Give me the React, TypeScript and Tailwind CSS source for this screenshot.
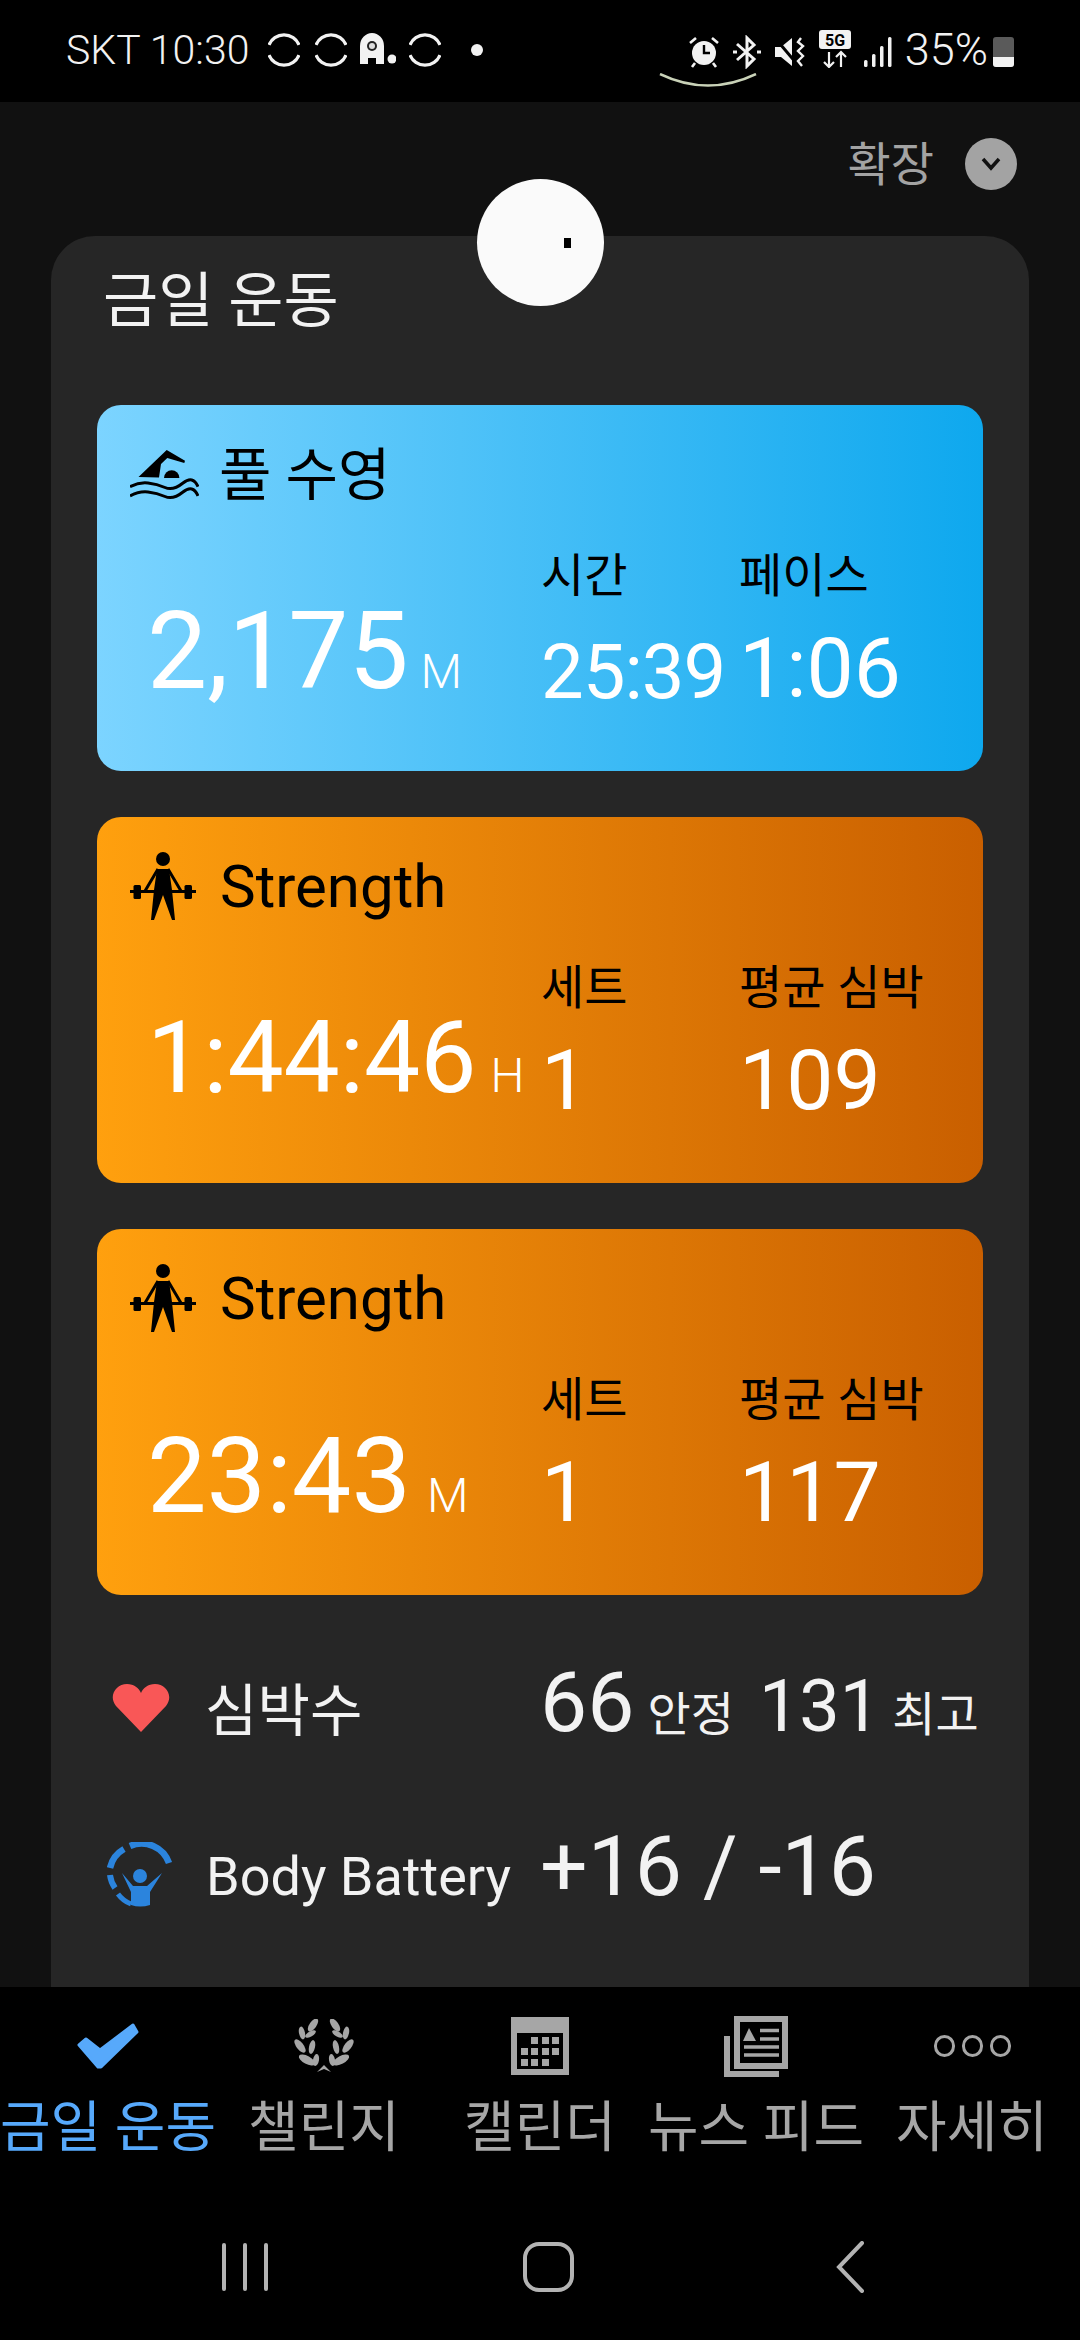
const FONT = "font-['Roboto','Noto_Sans_CJK_KR',sans-serif]";

const Ring = () => (
  <svg width="32" height="34" viewBox="0 0 32 34" fill="none" stroke="#f2f2f2" strokeWidth="3.2">
    <path d="M1 12 A16 15.5 0 0 1 31 12" />
    <path d="M1 22 A16 15.5 0 0 0 31 22" />
  </svg>
);

const Ghost = () => (
  <svg width="36" height="34" viewBox="0 0 36 34">
    <path d="M0 31 V13 A12 13 0 0 1 24 13 V31 H16 V25 H8 V31 Z" fill="#f2f2f2" />
    <circle cx="12" cy="13" r="5" fill="#222" />
    <circle cx="12" cy="13" r="3" fill="#ddd" />
    <circle cx="32" cy="26" r="4.5" fill="#f2f2f2" />
  </svg>
);

const StatusRight = () => (
  <div className="flex items-center">
    <svg width="30" height="32" viewBox="0 0 30 32" className="mt-1">
      <circle cx="15" cy="17" r="12" fill="#f2f2f2" />
      <path d="M15 9 V17 H21" stroke="#000" strokeWidth="2.4" fill="none" />
      <path d="M1 7 L7 2 M29 7 L23 2 M6 27 L3 31 M24 27 L27 31" stroke="#f2f2f2" strokeWidth="2.6" />
    </svg>
    <svg width="28" height="34" viewBox="0 0 28 34" fill="none" stroke="#f2f2f2" strokeWidth="3" className="ml-[14px] mt-1">
      <path d="M4 9 L21 24 L14 31 V3 L21 10 L4 25" />
      <path d="M0 17 H4 M24 17 H28" />
    </svg>
    <svg width="30" height="32" viewBox="0 0 30 32" className="ml-[14px] mt-1">
      <path d="M0 11 H6 L17 2 V30 L6 21 H0 Z" fill="#f2f2f2" />
      <path d="M0 2 L22 28" stroke="#000" strokeWidth="3" />
      <path d="M26 2 L23 6 L28 10 L23 15 L28 20 L23 25 L27 30" stroke="#f2f2f2" strokeWidth="2.4" fill="none" />
    </svg>
    <svg width="32" height="38" viewBox="0 0 32 38" className="ml-[14px] -mt-[2px]">
      <rect width="32" height="19" rx="3" fill="#f2f2f2" />
      <text x="16" y="16" textAnchor="middle" fontSize="16" fontWeight="700" fontFamily="Roboto" fill="#000">5G</text>
      <path d="M10 22 V37 M5 32 L10 37 L15 32 M22 37 V22 M17 27 L22 22 L27 27" stroke="#f2f2f2" strokeWidth="2.2" fill="none" />
    </svg>
    <svg width="28" height="30" viewBox="0 0 28 30" className="ml-[13px] mt-1" fill="#f2f2f2">
      <rect x="0" y="23" width="3.5" height="7" rx="1.5" />
      <rect x="8" y="17" width="3.5" height="13" rx="1.5" />
      <rect x="16" y="9" width="3.5" height="21" rx="1.5" />
      <rect x="24" y="0" width="3.5" height="30" rx="1.5" />
    </svg>
    <span className="ml-[13px] text-[45px] font-light leading-none text-[#f2f2f2]">35%</span>
    <div className="ml-[5px] mt-1 flex h-[30px] w-[21px] flex-col justify-end overflow-hidden rounded-[3px] bg-[#5a5a5a]">
      <div className="h-[10px] bg-[#f2f2f2]" />
    </div>
  </div>
);

const StatusBar = () => (
  <div className="relative flex h-[102px] shrink-0 items-start justify-between bg-black pl-[66px] pr-[66px] pt-[27px]">
    <div className="flex items-center">
      <span className="text-[41px] leading-[46px] font-light text-[#f2f2f2]">SKT 10:30</span>
      <div className="ml-[19px] flex items-center">
        <Ring />
        <div className="ml-[15px]"><Ring /></div>
        <div className="ml-[13px]"><Ghost /></div>
        <div className="ml-[13px]"><Ring /></div>
        <div className="ml-[30px] size-[12px] rounded-full bg-[#f2f2f2]" />
      </div>
    </div>
    <StatusRight />
    <svg width="100" height="16" viewBox="0 0 100 16" className="absolute left-[658px] top-[73px]" fill="none">
      <path d="M2 1 Q50 24 98 1" stroke="#c9d2b8" strokeWidth="2.5" />
    </svg>
  </div>
);

const SwimIcon = () => (
  <svg width="69" height="50" viewBox="0 0 69 50" className="shrink-0">
    <path d="M8.5 27 L36.7 0 L55 10.7 L54.3 13 L37.3 8 L31 14 L29 27.5 Z" fill="#000" />
    <path d="M34 28 A7.7 7.7 0 0 1 49.4 28 Z" fill="#000" />
    <path d="M0 36.7 Q9 32 18 33 T35 37.5 T53 33 T68 36.7 M0 46 Q9 41 18 42 T35 46.5 T53 42 T68 46" stroke="#000" strokeWidth="3" fill="none" />
  </svg>
);

const LiftIcon = () => (
  <svg width="68" height="70" viewBox="0 0 68 70" className="shrink-0">
    <circle cx="33" cy="7" r="7" fill="#000" />
    <path d="M27 17 H39 L42 38 L45 68 H42 L33 43 L24 68 H21 L24 38 Z" fill="#000" />
    <path d="M28 17 L15 39 M38 17 L51 39" stroke="#000" strokeWidth="3" fill="none" />
    <path d="M0 39.5 H66" stroke="#000" strokeWidth="3" />
    <rect x="3.5" y="33" width="7.5" height="14" rx="1.5" fill="#000" />
    <rect x="54.5" y="33" width="7.5" height="14" rx="1.5" fill="#000" />
  </svg>
);

type ActivityProps = {
  title: string;
  titleSize: string;
  gap: string;
  gradient: string;
  icon: React.ReactNode;
  total: string;
  totalSize: string;
  unit: string;
  unitGap: string;
  labelA: string;
  valueA: string;
  sizeA: string;
  labelB: string;
  valueB: string;
};

const Activity = ({ title, titleSize, gap, gradient, icon, total, totalSize, unit, unitGap, labelA, valueA, sizeA, labelB, valueB }: ActivityProps) => (
  <div className={`h-[366px] rounded-[24px] ${gradient}`}>
    <div className={`flex h-[130px] items-center pl-[33px] pt-[10px] ${gap}`}>
      {icon}
      <span className={`leading-none text-black ${titleSize}`}>{title}</span>
    </div>
    <div className="grid grid-cols-[444px_198px_1fr]">
      <div className={`flex items-baseline pl-[50px] pt-[52px] ${unitGap}`}>
        <span className={`leading-[130px] text-white ${totalSize}`}>{total}</span>
        <span className="text-[48px] font-light leading-none text-white">{unit}</span>
      </div>
      <div className="pt-[13px]">
        <div className="text-[47px] leading-[56px] text-black">{labelA}</div>
        <div className={`mt-[21px] text-white ${sizeA}`}>{valueA}</div>
      </div>
      <div className="pt-[13px]">
        <div className="text-[47px] leading-[56px] text-black">{labelB}</div>
        <div className="mt-[21px] text-[84px] leading-[88px] text-white">{valueB}</div>
      </div>
    </div>
  </div>
);

const BatteryIcon = () => (
  <svg width="66" height="66" viewBox="0 0 66 66" fill="none" className="shrink-0">
    <path d="M23 4 A29 29 0 0 1 62 21" stroke="#2b84dd" strokeWidth="6.5" />
    <path d="M17 7 A29 29 0 0 0 3 26" stroke="#2b84dd" strokeWidth="6.5" />
    <path d="M3 33 A29 29 0 0 0 8 46" stroke="#2b84dd" strokeWidth="6" />
    <path d="M11 52 A29 29 0 0 0 24 62" stroke="#2b84dd" strokeWidth="5" />
    <circle cx="33" cy="34" r="7" fill="#2b84dd" />
    <path d="M15 31 L26 44 H40 L55 31 L43 50 V63 Q33 66 24 63 V50 Z" fill="#2b84dd" />
  </svg>
);

const leaves = [
  "translate(20 6) rotate(35) scale(3.5 7.5)",
  "translate(9 14) rotate(-12) scale(3 6.5)",
  "translate(17.5 15) rotate(60) scale(2.5 6)",
  "translate(7 27) rotate(-38) scale(3.5 8)",
  "translate(19 28) rotate(12) scale(3 7)",
  "translate(14 41) rotate(-62) scale(4 9)",
  "translate(23 41) rotate(10) scale(3 6)",
];

const LaurelIcon = () => (
  <svg width="62" height="54" viewBox="0 0 62 54" fill="#a6a6a6">
    {leaves.map((t) => (
      <g key={t}>
        <ellipse cx="0" cy="0" rx="1" ry="1" transform={t} />
        <ellipse cx="0" cy="0" rx="1" ry="1" transform={`translate(62 0) scale(-1 1) ${t}`} />
      </g>
    ))}
    <path d="M24 53 L31 46 L38 53 L31 50 Z" />
  </svg>
);

const CalendarIcon = () => {
  const rows = [
    [0, 1, 1, 1],
    [1, 1, 1, 1],
    [1, 1, 1, 0],
  ];
  return (
    <div className="flex h-[58px] w-[58px] flex-col bg-[#a6a6a6] px-[6px] pb-[6px] pt-[16px]">
      <div className="flex h-full flex-col justify-center gap-[4px] bg-black px-[4px]">
        {rows.map((row, i) => (
          <div key={i} className="flex justify-between">
            {row.map((on, j) => (
              <div key={j} className={on ? "size-[7px] bg-[#a6a6a6]" : "size-[7px]"} />
            ))}
          </div>
        ))}
      </div>
    </div>
  );
};

const NewsIcon = () => (
  <svg width="64" height="61" viewBox="0 0 64 61">
    <path d="M0 20 H6 V55 H55 V61 H0 Z" fill="#a6a6a6" />
    <rect x="10" y="0" width="54" height="53" fill="#a6a6a6" />
    <rect x="16" y="6" width="42" height="41" fill="#000" />
    <path d="M19 25 L25 12 L32 25 Z" fill="#a6a6a6" />
    <path d="M36 14.5 H55 M36 23 H55 M20 31 H55 M20 39 H55" stroke="#a6a6a6" strokeWidth="3.5" />
  </svg>
);

const DotsIcon = () => (
  <div className="flex gap-[7px]">
    <div className="h-[22px] w-[21px] rounded-full border-[3px] border-[#a6a6a6]" />
    <div className="h-[22px] w-[21px] rounded-full border-[3px] border-[#a6a6a6]" />
    <div className="h-[22px] w-[21px] rounded-full border-[3px] border-[#a6a6a6]" />
  </div>
);

const tabs = [
  {
    label: "금일 운동",
    active: true,
    icon: (
      <svg width="62" height="46" viewBox="0 0 62 46">
        <path d="M2 22 L9 16 L23 27 L56 2 L60 9 L24 44 L21 44 Z" fill="#57a9fb" stroke="#57a9fb" strokeWidth="3" strokeLinejoin="round" />
      </svg>
    ),
  },
  { label: "챌린지", active: false, icon: <LaurelIcon /> },
  { label: "캘린더", active: false, icon: <CalendarIcon /> },
  { label: "뉴스 피드", active: false, icon: <NewsIcon /> },
  { label: "자세히", active: false, icon: <DotsIcon /> },
];

export default function App() {
  return (
    <div className={`flex h-[2340px] w-[1080px] flex-col overflow-hidden bg-black ${FONT}`}>
      <StatusBar />
      <div className="relative flex min-h-0 flex-1 flex-col bg-[#111111]">
        <div className="flex h-[134px] shrink-0 items-center justify-end gap-[31px] pb-[10px] pr-[63px]">
          <span className="text-[47px] leading-none text-[#a3a3a3]">확장</span>
          <div className="flex size-[52px] items-center justify-center rounded-full bg-[#a3a3a3]">
            <svg width="20" height="14" viewBox="0 0 20 14" fill="none" stroke="#111" strokeWidth="3.5">
              <path d="M2 2 L10 11 L18 2" />
            </svg>
          </div>
        </div>
        <div className="absolute left-[477px] top-[77px] z-10 flex size-[127px] items-center justify-center rounded-full bg-[#fafafa]">
          <div className="ml-[54px] h-[10px] w-[7px] bg-black" />
        </div>
        <div className="mx-[51px] flex min-h-0 flex-1 flex-col rounded-t-[44px] bg-[#262626] px-[46px]">
          <div className="flex h-[169px] shrink-0 items-start pl-[6px] pt-[28px] text-[60px] leading-[76px] text-[#f2f2f2]">
            금일 운동
          </div>
          <div className="flex flex-col gap-[46px]">
            <Activity
              title="풀 수영"
              titleSize="text-[57px]"
              gap="gap-[20px]"
              gradient="bg-linear-to-r/srgb from-[#7cd4ff] to-[#0ea8ee]"
              icon={<SwimIcon />}
              total="2,175"
              totalSize="text-[107px]"
              unit="M"
              unitGap="gap-[12px]"
              labelA="시간"
              valueA="25:39"
              sizeA="text-[76px] leading-[94px] tracking-[-1px]"
              labelB="페이스"
              valueB="1:06"
            />
            <Activity
              title="Strength"
              titleSize="text-[60px]"
              gap="gap-[22px]"
              gradient="bg-linear-to-r/srgb from-[#ffa00e] to-[#c95f00]"
              icon={<LiftIcon />}
              total="1:44:46"
              totalSize="text-[100px] -mt-[6px]"
              unit="H"
              unitGap="gap-[14px]"
              labelA="세트"
              valueA="1"
              sizeA="text-[84px] leading-[88px]"
              labelB="평균 심박"
              valueB="109"
            />
            <Activity
              title="Strength"
              titleSize="text-[60px]"
              gap="gap-[22px]"
              gradient="bg-linear-to-r/srgb from-[#ffa00e] to-[#c95f00]"
              icon={<LiftIcon />}
              total="23:43"
              totalSize="text-[106px]"
              unit="M"
              unitGap="gap-[16px]"
              labelA="세트"
              valueA="1"
              sizeA="text-[84px] leading-[88px]"
              labelB="평균 심박"
              valueB="117"
            />
          </div>
          <div className="mt-[66px] flex items-baseline text-[#f2f2f2]">
            <div className="flex w-[108px] self-center pl-[15px] pt-[10px]">
              <svg width="58" height="48" viewBox="0 0 58 48">
                <path d="M29 48 L4 22 C-4 12 4 0 15 0 C22 0 27 4 29 9 C31 4 36 0 43 0 C54 0 62 12 54 22 Z" fill="#f95757" />
              </svg>
            </div>
            <span className="w-[335px] text-[57px] leading-none">심박수</span>
            <span className="text-[84px] leading-none">66</span>
            <span className="ml-[13px] text-[47px] leading-none">안정</span>
            <span className="ml-[25px] text-[72px] leading-none">131</span>
            <span className="ml-[12px] text-[47px] leading-none">최고</span>
          </div>
          <div className="mt-[80px] flex items-baseline text-[#f2f2f2]">
            <div className="flex w-[109px] self-center pl-[10px] pt-[16px]">
              <BatteryIcon />
            </div>
            <span className="w-[334px] text-[54px] leading-none">Body Battery</span>
            <span className="text-[84px] leading-none">+16 / -16</span>
          </div>
        </div>
      </div>
      <div className="grid h-[192px] shrink-0 grid-cols-[216px_216px_216px_216px_216px] bg-black pt-[23px]">
        {tabs.map((t) => (
          <div key={t.label} className="flex flex-col items-center">
            <div className="flex h-[72px] items-center justify-center">{t.icon}</div>
            <span className={`mt-[15px] whitespace-nowrap text-[55px] leading-[60px] ${t.active ? "text-[#57a9fb]" : "text-[#a6a6a6]"}`}>
              {t.label}
            </span>
          </div>
        ))}
      </div>
      <div className="flex h-[161px] shrink-0 items-center bg-black pl-[222px] pt-[15px]">
        <div className="flex gap-[17px]">
          <div className="h-[48px] w-[4px] rounded-full bg-[#b3b3b3]" />
          <div className="h-[48px] w-[4px] rounded-full bg-[#b3b3b3]" />
          <div className="h-[48px] w-[4px] rounded-full bg-[#b3b3b3]" />
        </div>
        <div className="ml-[255px] h-[50px] w-[51px] rounded-[16px] border-[4px] border-[#b3b3b3]" />
        <svg width="30" height="52" viewBox="0 0 30 52" fill="none" stroke="#b3b3b3" strokeWidth="4" strokeLinecap="round" className="ml-[261px]">
          <path d="M27 2 L4 26 L27 50" />
        </svg>
      </div>
    </div>
  );
}
